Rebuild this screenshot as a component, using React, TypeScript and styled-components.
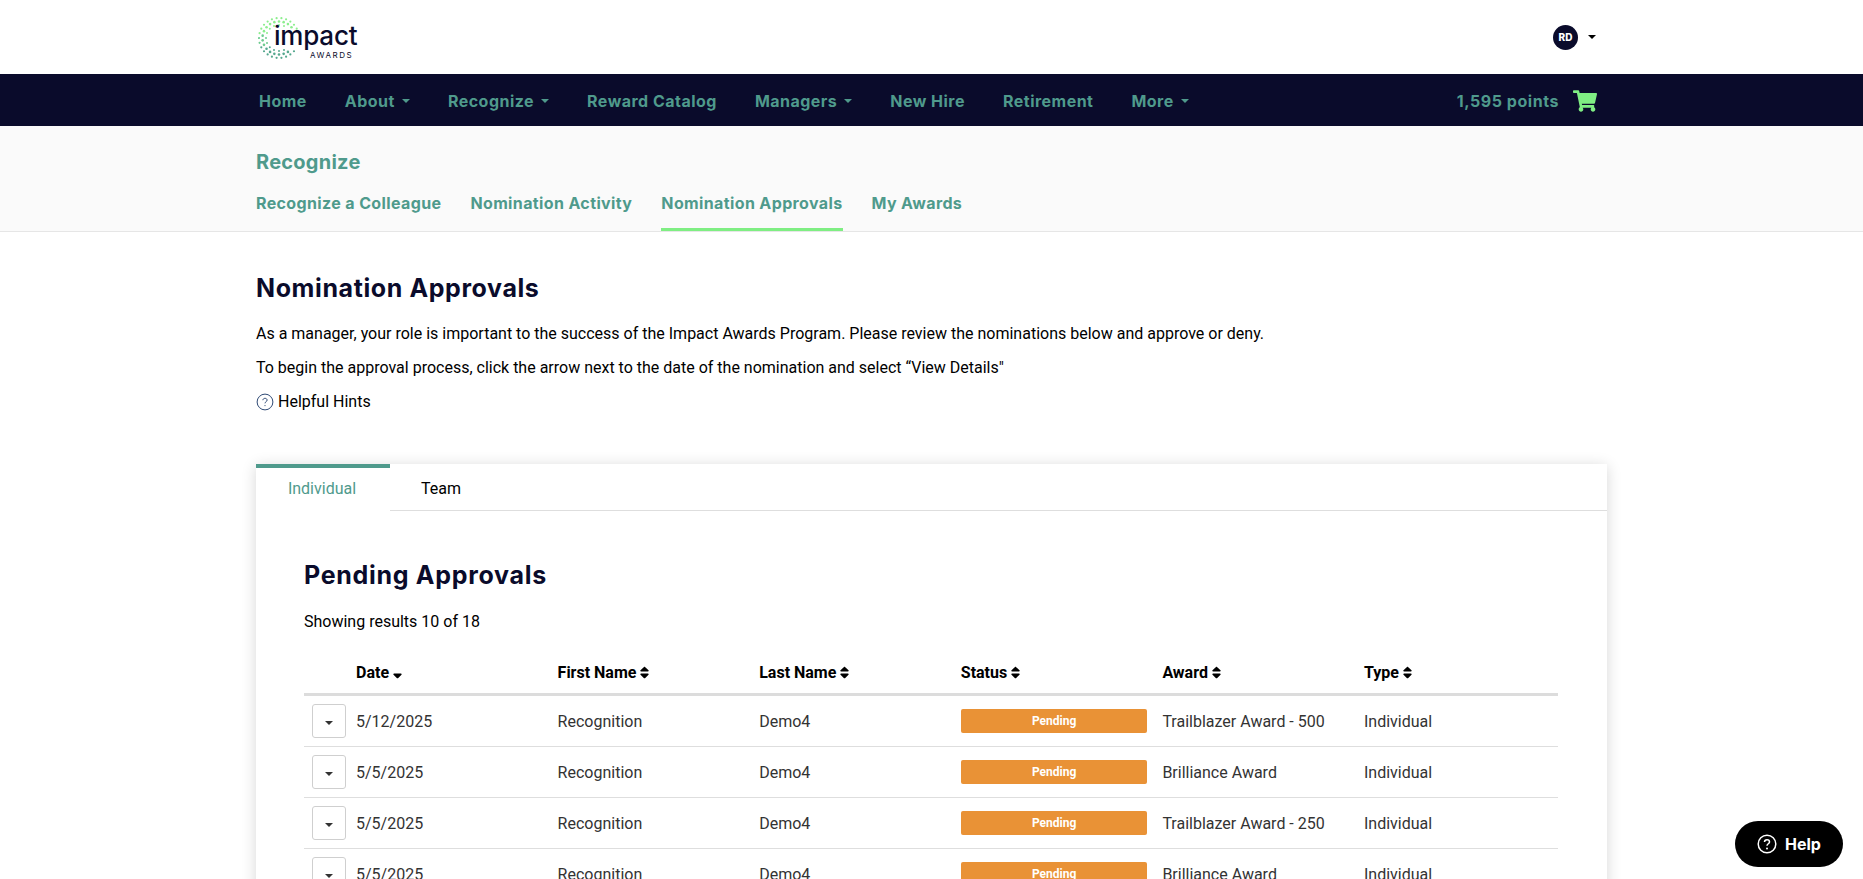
import { FaShoppingCart, FaSort, FaSortDown } from "react-icons/fa"
import styled, { createGlobalStyle } from "styled-components"

const NAVY = "#0a0b2b"
const TEAL = "#4f9a8c"
const GREEN = "#7fee83"
const HEADING_FONT = `"Inter", "Liberation Sans", sans-serif`

type Nomination = {
  date: string
  award: string
}

const navItems = [
  { label: "Home", caret: false },
  { label: "About", caret: true },
  { label: "Recognize", caret: true },
  { label: "Reward Catalog", caret: false },
  { label: "Managers", caret: true },
  { label: "New Hire", caret: false },
  { label: "Retirement", caret: false },
  { label: "More", caret: true },
]

const subTabs = ["Recognize a Colleague", "Nomination Activity", "Nomination Approvals", "My Awards"]
const columns = ["First Name", "Last Name", "Status", "Award", "Type"]

const nominations: Nomination[] = [
  { date: "5/12/2025", award: "Trailblazer Award - 500" },
  { date: "5/5/2025", award: "Brilliance Award" },
  { date: "5/5/2025", award: "Trailblazer Award - 250" },
  { date: "5/5/2025", award: "Brilliance Award" },
]

// the ring of dots in the logo, open on the right where the word sits
function logoDots() {
  const dots = []
  const rings = [
    { radius: 20, count: 26, size: 1.1, offset: 0 },
    { radius: 16.5, count: 22, size: 1.3, offset: 0.5 },
    { radius: 13, count: 16, size: 1, offset: 0 },
  ]
  for (const ring of rings) {
    for (let i = 0; i < ring.count; i++) {
      const angle = ((i + ring.offset) / ring.count) * Math.PI * 2
      const x = 21 + Math.cos(angle) * ring.radius
      const y = 22 + Math.sin(angle) * ring.radius
      if (ring.radius < 19 && x > 26 && y > 12 && y < 35) continue
      if (x > 32 && y > 14 && y < 32) continue
      const top = y / 44
      const color = top < 0.4 ? "#8cee8e" : top < 0.7 ? "#6ccb8e" : "#55a88e"
      dots.push(<circle key={`${ring.radius}-${i}`} cx={x} cy={y} r={ring.size} fill={color} />)
    }
  }
  return dots
}

function App() {
  return (
    <Page>
      <GlobalStyle />
      <TopBar>
        <Container>
          <TopRow>
            <Logo>
              <svg width="44" height="44" viewBox="0 0 44 44" aria-hidden="true">
                {logoDots()}
              </svg>
              <LogoWord>impact</LogoWord>
              <LogoSub>AWARDS</LogoSub>
            </Logo>
            <UserMenu>
              <Avatar>RD</Avatar>
              <Caret $color="#000" />
            </UserMenu>
          </TopRow>
        </Container>
      </TopBar>

      <NavBar>
        <Container>
          <NavRow>
            <NavList>
              {navItems.map((item) => (
                <NavItem key={item.label}>
                  {item.label}
                  {item.caret && <Caret $color={TEAL} />}
                </NavItem>
              ))}
            </NavList>
            <Points>
              1,595 points
              <FaShoppingCart size={24} color={GREEN} />
            </Points>
          </NavRow>
        </Container>
      </NavBar>

      <SubHeader>
        <Container>
          <SubTitle>Recognize</SubTitle>
          <SubTabs>
            {subTabs.map((tab) => (
              <SubTab key={tab} $active={tab === "Nomination Approvals"}>
                {tab}
              </SubTab>
            ))}
          </SubTabs>
        </Container>
      </SubHeader>

      <Container>
        <Intro>
          <PageTitle>Nomination Approvals</PageTitle>
          <IntroText>
            As a manager, your role is important to the success of the Impact Awards Program. Please review the
            nominations below and approve or deny.
          </IntroText>
          <IntroText>
            To begin the approval process, click the arrow next to the date of the nomination and select “View Details"
          </IntroText>
          <Hints>
            <svg width="18" height="18" viewBox="0 0 18 18" aria-hidden="true">
              <circle cx="9" cy="9" r="7.9" fill="none" stroke="#2f4a75" strokeWidth="1" />
              <path
                d="M6.9 7.2c0-1.2 1-1.9 2.1-1.9s2.1.7 2.1 1.8c0 1.6-2.1 1.6-2.1 3.2"
                fill="none"
                stroke="#2f4a75"
                strokeWidth="1"
              />
              <circle cx="9" cy="12.6" r=".6" fill="#2f4a75" />
            </svg>
            Helpful Hints
          </Hints>
        </Intro>

        <Card>
          <CardTabs>
            <CardTab $active>Individual</CardTab>
            <CardTab>Team</CardTab>
            <CardTabRest />
          </CardTabs>
          <CardBody>
            <SectionTitle>Pending Approvals</SectionTitle>
            <ResultCount>Showing results 10 of 18</ResultCount>
            <Table>
              <colgroup>
                <ButtonCol />
                <DataCol />
                <DataCol />
                <DataCol />
                <DataCol />
                <DataCol />
                <col />
              </colgroup>
              <thead>
                <tr>
                  <HeadCell />
                  <HeadCell>
                    Date <FaSortDown size={15} />
                  </HeadCell>
                  {columns.map((column) => (
                    <HeadCell key={column}>
                      {column} <FaSort size={15} />
                    </HeadCell>
                  ))}
                </tr>
              </thead>
              <tbody>
                {nominations.map((nomination, index) => (
                  <tr key={index}>
                    <Cell>
                      <RowButton>
                        <Caret $color="#333" />
                      </RowButton>
                    </Cell>
                    <Cell>{nomination.date}</Cell>
                    <Cell>Recognition</Cell>
                    <Cell>Demo4</Cell>
                    <Cell>
                      <StatusBadge>Pending</StatusBadge>
                    </Cell>
                    <Cell>{nomination.award}</Cell>
                    <Cell>Individual</Cell>
                  </tr>
                ))}
              </tbody>
            </Table>
          </CardBody>
        </Card>
      </Container>

      <HelpButton>
        <svg width="20" height="20" viewBox="0 0 20 20" aria-hidden="true">
          <circle cx="10" cy="10" r="8.8" fill="none" stroke="#fff" strokeWidth="1.5" />
          <path
            d="M7.5 8c0-1.500 1.200-2.300 2.500-2.300s2.500.8 2.500 2.200c0 1.900-2.500 1.800-2.500 3.800"
            fill="none"
            stroke="#fff"
            strokeWidth="1.5"
          />
          <circle cx="10" cy="14.400" r="1" fill="#fff" />
        </svg>
        Help
      </HelpButton>
    </Page>
  )
}

const GlobalStyle = createGlobalStyle`
  html, body {
    margin: 0;
    height: 879px;
    overflow: hidden;
    background: #fff;
    font-family: "Roboto", "Liberation Sans", sans-serif;
  }
`

const Page = styled.div`
  height: 879px;
  overflow: hidden;
  color: #000;
`

const Container = styled.div`
  width: 1351px;
  margin: 0 auto;
`

const TopBar = styled.header`
  height: 74px;
  background: #fff;
`

const TopRow = styled.div`
  height: 74px;
  display: flex;
  align-items: center;
  justify-content: space-between;
`

const Logo = styled.div`
  position: relative;
  width: 102px;
  height: 44px;
  margin-left: 2px;
  margin-top: 1px;
`

const LogoWord = styled.span`
  position: absolute;
  left: 16px;
  top: 3px;
  font-family: ${HEADING_FONT};
  font-size: 26px;
  font-weight: 500;
  letter-spacing: -0.2px;
  line-height: 34px;
  color: ${NAVY};
`

const LogoSub = styled.span`
  position: absolute;
  left: 52px;
  top: 34px;
  font-family: ${HEADING_FONT};
  font-size: 8px;
  letter-spacing: 1.5px;
  line-height: 10px;
  color: ${NAVY};
`

const UserMenu = styled.div`
  display: flex;
  align-items: center;
  gap: 10px;
  margin-right: 11px;
`

const Avatar = styled.div`
  width: 25px;
  height: 25px;
  border-radius: 50%;
  background: ${NAVY};
  color: #fff;
  display: flex;
  align-items: center;
  justify-content: center;
  font-family: ${HEADING_FONT};
  font-size: 10px;
  font-weight: 800;
`

const Caret = styled.span<{ $color: string }>`
  display: inline-block;
  width: 0;
  height: 0;
  border-top: 4px solid ${(p) => p.$color};
  border-left: 4px solid transparent;
  border-right: 4px solid transparent;
`

const NavBar = styled.nav`
  height: 52px;
  background: ${NAVY};
`

const NavRow = styled.div`
  height: 52px;
  display: flex;
  align-items: center;
  justify-content: space-between;
  padding: 1px 10px 0 3px;
  box-sizing: border-box;
`

const NavList = styled.div`
  display: flex;
  align-items: center;
  gap: 38px;
`

const NavItem = styled.a`
  display: flex;
  align-items: center;
  gap: 7px;
  font-family: ${HEADING_FONT};
  font-size: 16px;
  font-weight: 700;
  letter-spacing: 0.48px;
  color: ${TEAL};
`

const Points = styled.div`
  display: flex;
  align-items: center;
  gap: 14px;
  font-family: ${HEADING_FONT};
  font-size: 16px;
  font-weight: 700;
  letter-spacing: 0.55px;
  color: ${TEAL};
`

const SubHeader = styled.div`
  height: 106px;
  box-sizing: border-box;
  background: #fafafa;
  border-bottom: 1px solid #e6e6e6;
`

const SubTitle = styled.h2`
  margin: 0;
  padding-top: 23px;
  font-family: ${HEADING_FONT};
  font-size: 20px;
  font-weight: 700;
  letter-spacing: 0.25px;
  line-height: 26px;
  color: ${TEAL};
`

const SubTabs = styled.div`
  display: flex;
  gap: 29px;
  margin-top: 10px;
`

const SubTab = styled.a<{ $active?: boolean }>`
  height: 46px;
  box-sizing: border-box;
  padding-top: 8px;
  font-family: ${HEADING_FONT};
  font-size: 16px;
  font-weight: 700;
  letter-spacing: 0.37px;
  line-height: 20px;
  color: ${TEAL};
  border-bottom: 3px solid ${(p) => (p.$active ? GREEN : "transparent")};
`

const Intro = styled.section`
  padding-top: 40px;
  height: 232px;
  box-sizing: border-box;
`

const PageTitle = styled.h1`
  margin: 0 0 19px;
  font-family: ${HEADING_FONT};
  font-size: 25px;
  font-weight: 700;
  letter-spacing: 0.6px;
  line-height: 32px;
  color: ${NAVY};
`

const IntroText = styled.p`
  margin: 0 0 12px;
  font-size: 16px;
  line-height: 22px;
`

const Hints = styled.div`
  display: flex;
  align-items: center;
  gap: 4px;
  font-size: 16px;
  line-height: 22px;
`

const Card = styled.section`
  background: #fff;
  box-shadow: 0 2px 14px rgba(0, 0, 0, 0.16);
`

const CardTabs = styled.div`
  display: flex;
  height: 47px;
`

const CardTab = styled.div<{ $active?: boolean }>`
  width: ${(p) => (p.$active ? "134px" : "102px")};
  box-sizing: border-box;
  display: flex;
  align-items: center;
  justify-content: center;
  padding: 0 ${(p) => (p.$active ? "2px" : "0")} 2px 0;
  font-size: 16px;
  color: ${(p) => (p.$active ? TEAL : "#000")};
  border-top: 4px solid ${(p) => (p.$active ? TEAL : "transparent")};
  border-bottom: 1px solid ${(p) => (p.$active ? "transparent" : "#dedede")};
`

const CardTabRest = styled.div`
  flex: 1;
  border-bottom: 1px solid #dedede;
`

const CardBody = styled.div`
  padding: 46px 49px 0 48px;
`

const SectionTitle = styled.h2`
  margin: 0;
  font-family: ${HEADING_FONT};
  font-size: 25px;
  font-weight: 700;
  letter-spacing: 0.7px;
  line-height: 36px;
  color: ${NAVY};
`

const ResultCount = styled.div`
  margin-top: 18px;
  font-size: 16px;
  line-height: 22px;
`

const Table = styled.table`
  width: 100%;
  margin-top: 18px;
  border-collapse: collapse;
  table-layout: fixed;
`

const ButtonCol = styled.col`
  width: 52px;
`

const DataCol = styled.col`
  width: 201.6px;
`

const HeadCell = styled.th`
  height: 42px;
  padding: 0;
  text-align: left;
  font-size: 16px;
  font-weight: 700;
  border-bottom: 3px solid #dcdcdc;

  svg {
    vertical-align: -2px;
    margin-left: -3px;
  }
`

const Cell = styled.td`
  height: 50px;
  padding: 0 15px 0 0;
  font-size: 16px;
  color: #333;
  border-bottom: 1px solid #dedede;
`

const RowButton = styled.button`
  display: flex;
  align-items: center;
  justify-content: center;
  width: 34px;
  height: 34px;
  margin-left: 8px;
  padding: 4px 0 0;
  background: #fff;
  border: 1px solid #cfcfcf;
  border-radius: 3px;
`

const StatusBadge = styled.div`
  height: 24px;
  border-radius: 2px;
  background: #e99236;
  color: #fff;
  display: flex;
  align-items: center;
  justify-content: center;
  font-size: 12px;
  font-weight: 700;
`

const HelpButton = styled.button`
  position: fixed;
  left: 1735px;
  top: 821px;
  width: 108px;
  height: 46px;
  display: flex;
  align-items: center;
  justify-content: center;
  gap: 8px;
  border: none;
  border-radius: 23px;
  background: #000;
  color: #fff;
  font-family: ${HEADING_FONT};
  font-size: 16px;
  font-weight: 700;
`

export default App
